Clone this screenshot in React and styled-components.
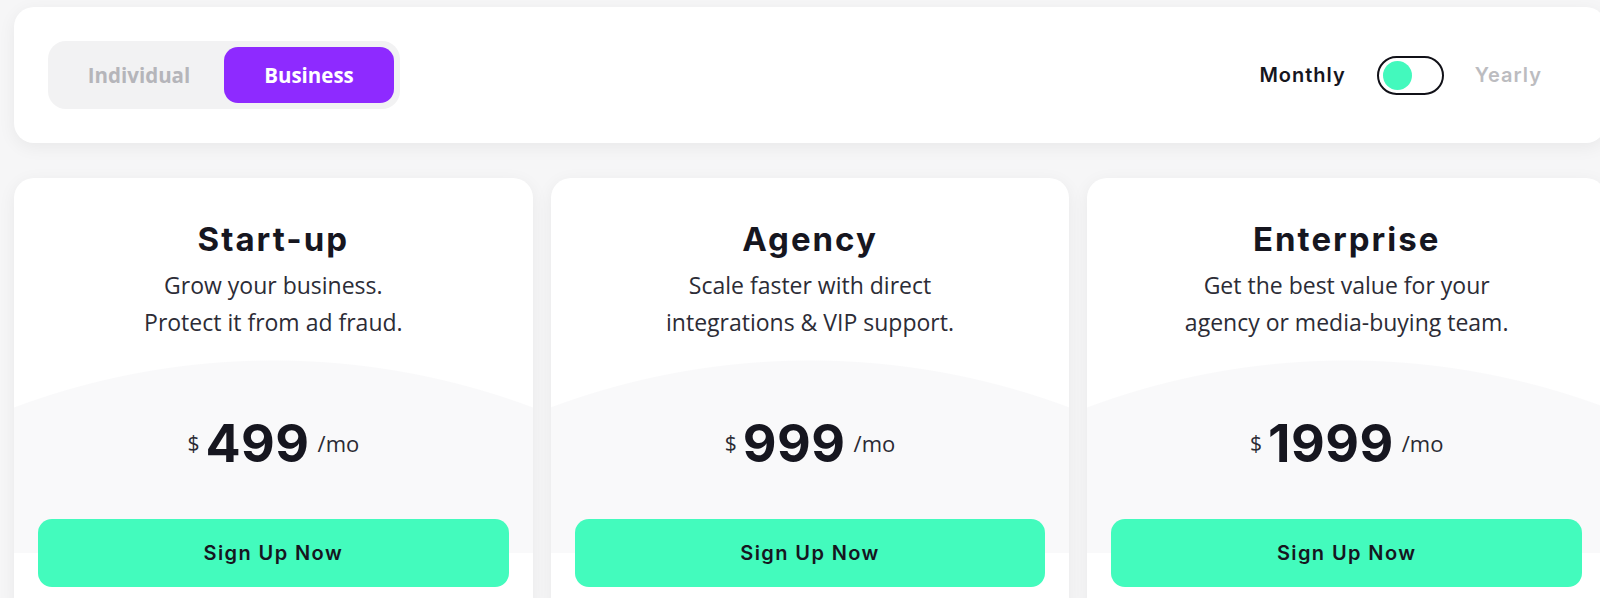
import React from 'react';
import styled, { createGlobalStyle } from 'styled-components';

const GlobalStyle = createGlobalStyle`
    html, body {
        margin: 0;
        padding: 0;
        background: #f6f6f7;
        overflow: hidden;
    }
`

const plans = [
    { name: 'Start-up', lines: ['Grow your business.', 'Protect it from ad fraud.'], price: '499' },
    { name: 'Agency', lines: ['Scale faster with direct', 'integrations & VIP support.'], price: '999' },
    { name: 'Enterprise', lines: ['Get the best value for your', 'agency or media-buying team.'], price: '1999' },
]

const App = () => {
    return (
        <Page>
            <GlobalStyle />
            <TopBar>
                <Segmented>
                    <Segment>Individual</Segment>
                    <Segment active>Business</Segment>
                </Segmented>
                <Billing>
                    <BillingLabel active>Monthly</BillingLabel>
                    <Toggle><Knob /></Toggle>
                    <BillingLabel>Yearly</BillingLabel>
                </Billing>
            </TopBar>

            <Cards>
                {plans.map(plan => (
                    <Card key={plan.name}>
                        <CardHead>
                            <Title>{plan.name}</Title>
                            <Desc>{plan.lines[0]}<br />{plan.lines[1]}</Desc>
                        </CardHead>
                        <PriceArea>
                            <Price>
                                <Currency>$</Currency>
                                <Amount>{plan.price}</Amount>
                                <Per>/mo</Per>
                            </Price>
                        </PriceArea>
                        <Footer>
                            <SignUp>Sign Up Now</SignUp>
                        </Footer>
                    </Card>
                ))}
            </Cards>
        </Page>
    )
}

const Page = styled.div`
    width: 1592px;
    padding: 7px 0 0 14px;
`

const TopBar = styled.div`
    display: flex;
    align-items: center;
    justify-content: space-between;
    height: 136px;
    padding: 0 64px 0 34px;
    box-sizing: border-box;
    background: #fff;
    border-radius: 20px;
    box-shadow: 0 4px 18px rgba(0, 0, 0, 0.06);
`

const Segmented = styled.div`
    display: flex;
    padding: 6px;
    background: #f2f2f3;
    border-radius: 18px;
`

const Segment = styled.div`
    width: 170px;
    height: 56px;
    display: flex;
    align-items: center;
    justify-content: center;
    border-radius: 14px;
    font-family: 'Open Sans', sans-serif;
    font-weight: 700;
    font-size: 20.5px;
    color: ${props => props.active ? '#fff' : '#b5b5ba'};
    background: ${props => props.active ? '#8e2aff' : 'transparent'};
`

const Billing = styled.div`
    display: flex;
    align-items: center;
    gap: 31px;
`

const BillingLabel = styled.span`
    font-family: Inter, sans-serif;
    font-weight: 600;
    font-size: 20px;
    letter-spacing: 1px;
    color: ${props => props.active ? '#16161e' : '#bcbcc0'};
`

const Toggle = styled.div`
    width: 67px;
    height: 39px;
    box-sizing: border-box;
    border: 2.5px solid #111118;
    border-radius: 20px;
    display: flex;
    align-items: center;
    padding-left: 4px;
`

const Knob = styled.div`
    width: 29px;
    height: 29px;
    border-radius: 50%;
    background: #43f9bd;
`

const Cards = styled.div`
    display: grid;
    grid-template-columns: repeat(3, 1fr);
    gap: 18px;
    margin-top: 35px;
`

const Card = styled.div`
    background: #fff;
    border-radius: 20px;
    box-shadow: 0 4px 18px rgba(0, 0, 0, 0.06);
    overflow: hidden;
    height: 440px;
`

const CardHead = styled.div`
    display: flex;
    flex-direction: column;
    align-items: center;
    padding: 41px 24px 19px;
    text-align: center;
`

const Title = styled.h2`
    margin: 0 0 8px;
    font-family: Inter, sans-serif;
    font-weight: 700;
    font-size: 33px;
    line-height: 40px;
    letter-spacing: 2px;
    color: #16161f;
`

const Desc = styled.p`
    margin: 0;
    font-family: 'Open Sans', sans-serif;
    font-size: 23px;
    line-height: 37px;
    color: #2c2c36;
`

const PriceArea = styled.div`
    padding: 53px 24px 46px;
    background: radial-gradient(circle 740px at 50% 740px, #f9f9fa 739px, rgba(249, 249, 250, 0) 740px);
`

const Price = styled.div`
    display: flex;
    align-items: center;
    justify-content: center;
    height: 60px;
`

const Currency = styled.span`
    font-family: 'Open Sans', sans-serif;
    font-size: 21px;
    color: #2a2a33;
    margin-right: 6px;
`

const Amount = styled.span`
    font-family: Inter, sans-serif;
    font-weight: 700;
    font-size: 52px;
    letter-spacing: 0.5px;
    color: #16161f;
`

const Per = styled.span`
    font-family: 'Open Sans', sans-serif;
    font-size: 22px;
    color: #2a2a33;
    margin-left: 8px;
`

const Footer = styled.div`
    padding: 0 24px;
    background: linear-gradient(to bottom, #f9f9fa 50%, #fff 50%);
`

const SignUp = styled.button`
    width: 100%;
    height: 68px;
    border: none;
    border-radius: 14px;
    background: #43fbbd;
    font-family: Inter, sans-serif;
    font-weight: 600;
    font-size: 20px;
    letter-spacing: 1.4px;
    color: #16161f;
    cursor: pointer;
`

export default App;
